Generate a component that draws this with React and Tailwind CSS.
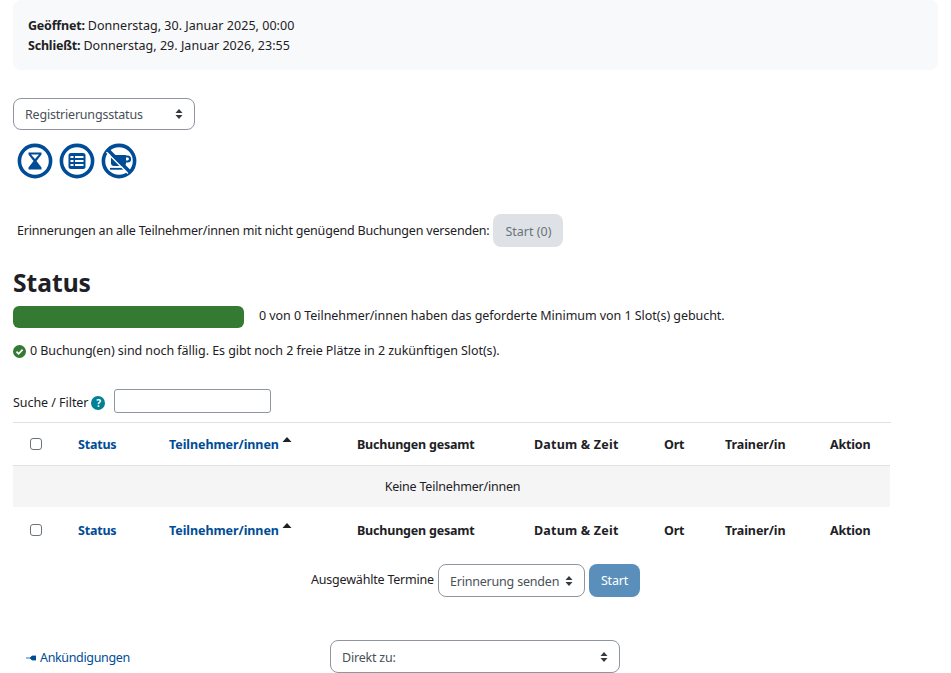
import React from 'react';

const font = { fontFamily: '"Noto Sans", sans-serif' };

function Updown() {
  return (
    <svg width="8" height="12" viewBox="0 0 8 12" className="shrink-0">
      <path d="M4 1 L7.5 5 H0.5 Z M4 11 L0.5 7 H7.5 Z" fill="#343a40" />
    </svg>
  );
}

function Select({ label, className }) {
  return (
    <div className={`flex items-center justify-between rounded-lg border border-[#8f959e] bg-white pl-[11px] pr-[11px] whitespace-nowrap text-[#495057] ${className}`}>
      <span className="translate-y-px">{label}</span>
      <Updown />
    </div>
  );
}

function RoundIcon({ children }) {
  return (
    <svg width="36" height="36" viewBox="0 0 36 36">
      <circle cx="18" cy="18" r="15.6" fill="none" stroke="#004c96" strokeWidth="3.6" />
      {children}
    </svg>
  );
}

function HeaderRow() {
  return (
    <div className="flex h-[42px] items-center font-bold text-[#1d2125]">
      <div className="flex w-[46px] justify-center">
        <span className="h-[12px] w-[12px] rounded-[3px] border border-[#6a737b] bg-white" />
      </div>
      <div className="w-[110px] pl-[19px] text-[#004c96]"><span className="translate-y-px inline-block">Status</span></div>
      <div className="flex w-[188px] text-[#004c96]">
        <span className="translate-y-px tracking-[-0.07px]">Teilnehmer/innen</span>
        <svg width="10" height="6" viewBox="0 0 10 6" className="ml-[3px] mt-[3px]"><path d="M5 0 L9.5 5 H0.5 Z" fill="#1d2125" /></svg>
      </div>
      <div className="w-[177px] translate-y-px">Buchungen gesamt</div>
      <div className="w-[130px] translate-y-px tracking-[0.2px]">Datum &amp; Zeit</div>
      <div className="w-[61px] translate-y-px">Ort</div>
      <div className="w-[105px] translate-y-px tracking-[-0.08px]">Trainer/in</div>
      <div className="translate-y-px">Aktion</div>
    </div>
  );
}

export default function App() {
  return (
    <div className="h-[673px] overflow-hidden bg-white pl-[13px] text-[12.5px] leading-[20px] tracking-[-0.2px] text-[#1d2125]" style={font}>
      <div className="mr-[13px] h-[70px] rounded-lg bg-[#f8f9fa] pl-[15px] pt-[16px]">
        <div><b>Geöffnet:</b> <span className="tracking-[0.03px]">Donnerstag, 30. Januar 2025, 00:00</span></div>
        <div><b>Schließt:</b> <span className="tracking-[0.03px]">Donnerstag, 29. Januar 2026, 23:55</span></div>
      </div>

      <Select label="Registrierungsstatus" className="mt-[28px] h-[32px] w-[182px]" />

      <div className="mt-[13px] flex h-[36px] gap-[6px] pl-[4px]">
        <RoundIcon>
          <path d="M11.5 9.5 H24.5 V11.5 L19.5 18 L24.5 24.5 V26.5 H11.5 V24.5 L16.5 18 L11.5 11.5 Z" fill="#004c96" />
          <path d="M14 11.5 H22 L18 16 Z" fill="#fff" />
        </RoundIcon>
        <RoundIcon>
          <rect x="9.5" y="10" width="17" height="16" rx="2.5" fill="#004c96" />
          <path d="M11.5 13h3v2h-3zM16 13h8.5v2H16zM11.5 17h3v2h-3zM16 17h8.5v2H16zM11.5 21h3v2h-3zM16 21h8.5v2H16z" fill="#fff" />
        </RoundIcon>
        <RoundIcon>
          <path d="M10 12 H25 V20 A3 3 0 0 1 22 23 H13 A3 3 0 0 1 10 20 Z" fill="#004c96" />
          <path d="M25 13.5 H26.5 A2.2 2.2 0 0 1 26.5 18.5 H25" fill="none" stroke="#004c96" strokeWidth="2.2" />
          <path d="M9 25.8 H23" stroke="#004c96" strokeWidth="1.8" />
          <path d="M5.5 9 L27 30.5" stroke="#fff" strokeWidth="1.6" />
          <path d="M7 7 L29 29" stroke="#004c96" strokeWidth="3.4" />
        </RoundIcon>
      </div>

      <div className="mt-[35px] flex h-[33px] items-center pl-[4px]">
        <span>Erinnerungen an alle Teilnehmer/innen mit nicht genügend Buchungen versenden:</span>
        <span className="ml-[4px] flex h-[33px] w-[70px] items-center justify-center rounded-lg bg-[#dee2e6] text-[#6a737b]"><span className="translate-y-px tracking-[0px]">Start (0)</span></span>
      </div>

      <h2 className="mt-[19px] text-[24.6px] font-bold leading-[34px] tracking-normal text-[#1d2125]">Status</h2>

      <div className="mt-[6px] flex h-[22px] items-center">
        <div className="h-[22px] w-[231px] rounded-md bg-[#357a32]" />
        <span className="ml-[15px] -translate-y-px tracking-[-0.05px]">0 von 0 Teilnehmer/innen haben das geforderte Minimum von 1 Slot(s) gebucht.</span>
      </div>

      <div className="mt-[13px] flex h-[20px] items-center gap-[4px]">
        <svg width="13" height="13" viewBox="0 0 13 13">
          <circle cx="6.5" cy="6.5" r="6.5" fill="#357a32" />
          <path d="M3.5 6.7 L5.6 8.8 L9.6 4.6" fill="none" stroke="#fff" strokeWidth="1.7" />
        </svg>
        <span className="tracking-[-0.06px]">0 Buchung(en) sind noch fällig. Es gibt noch 2 freie Plätze in 2 zukünftigen Slot(s).</span>
      </div>

      <div className="mt-[28px] flex h-[24px] items-center">
        <span className="translate-y-[2px] tracking-[-0.05px]">Suche / Filter</span>
        <span className="ml-[3px] mt-[3px] flex h-[14px] w-[14px] items-center justify-center rounded-full bg-[#008196] text-[10px] font-bold leading-none text-white">?</span>
        <div className="ml-[9px] h-[24px] w-[157px] rounded-[3px] border border-[#8f959e] bg-white" />
      </div>

      <div className="mt-[9px] w-[878px]">
        <div className="border-t border-[#dee2e6]">
          <HeaderRow />
        </div>
        <div className="flex h-[42px] w-[877px] items-center justify-center border-t border-[#dee2e6] bg-[#f5f5f5] pl-[2px]">Keine Teilnehmer/innen</div>
        <div className="pt-[2px]">
          <HeaderRow />
        </div>
      </div>

      <div className="mt-[13px] flex h-[33px] items-center pl-[298px]">
        <span className="-translate-y-px">Ausgewählte Termine</span>
        <Select label="Erinnerung senden" className="ml-[4px] h-[33px] w-[147px]" />
        <span className="ml-[4px] flex h-[33px] w-[51px] items-center justify-center rounded-lg bg-[#5a8fbb] text-white">Start</span>
      </div>

      <div className="mt-[43px] flex h-[33px] items-center">
        <a className="ml-[13px] flex w-[304px] translate-y-px items-center tracking-[-0.35px] text-[#004c96]">
          <svg width="10" height="6" viewBox="0 0 10 6" className="mr-[4px]"><path d="M0 3 H4 M4 3 L6 1 H10 V5 H6 Z" fill="#004c96" stroke="#004c96" strokeWidth="0.8" /></svg>
          Ankündigungen
        </a>
        <Select label="Direkt zu:" className="h-[33px] w-[290px]" />
      </div>
    </div>
  );
}
